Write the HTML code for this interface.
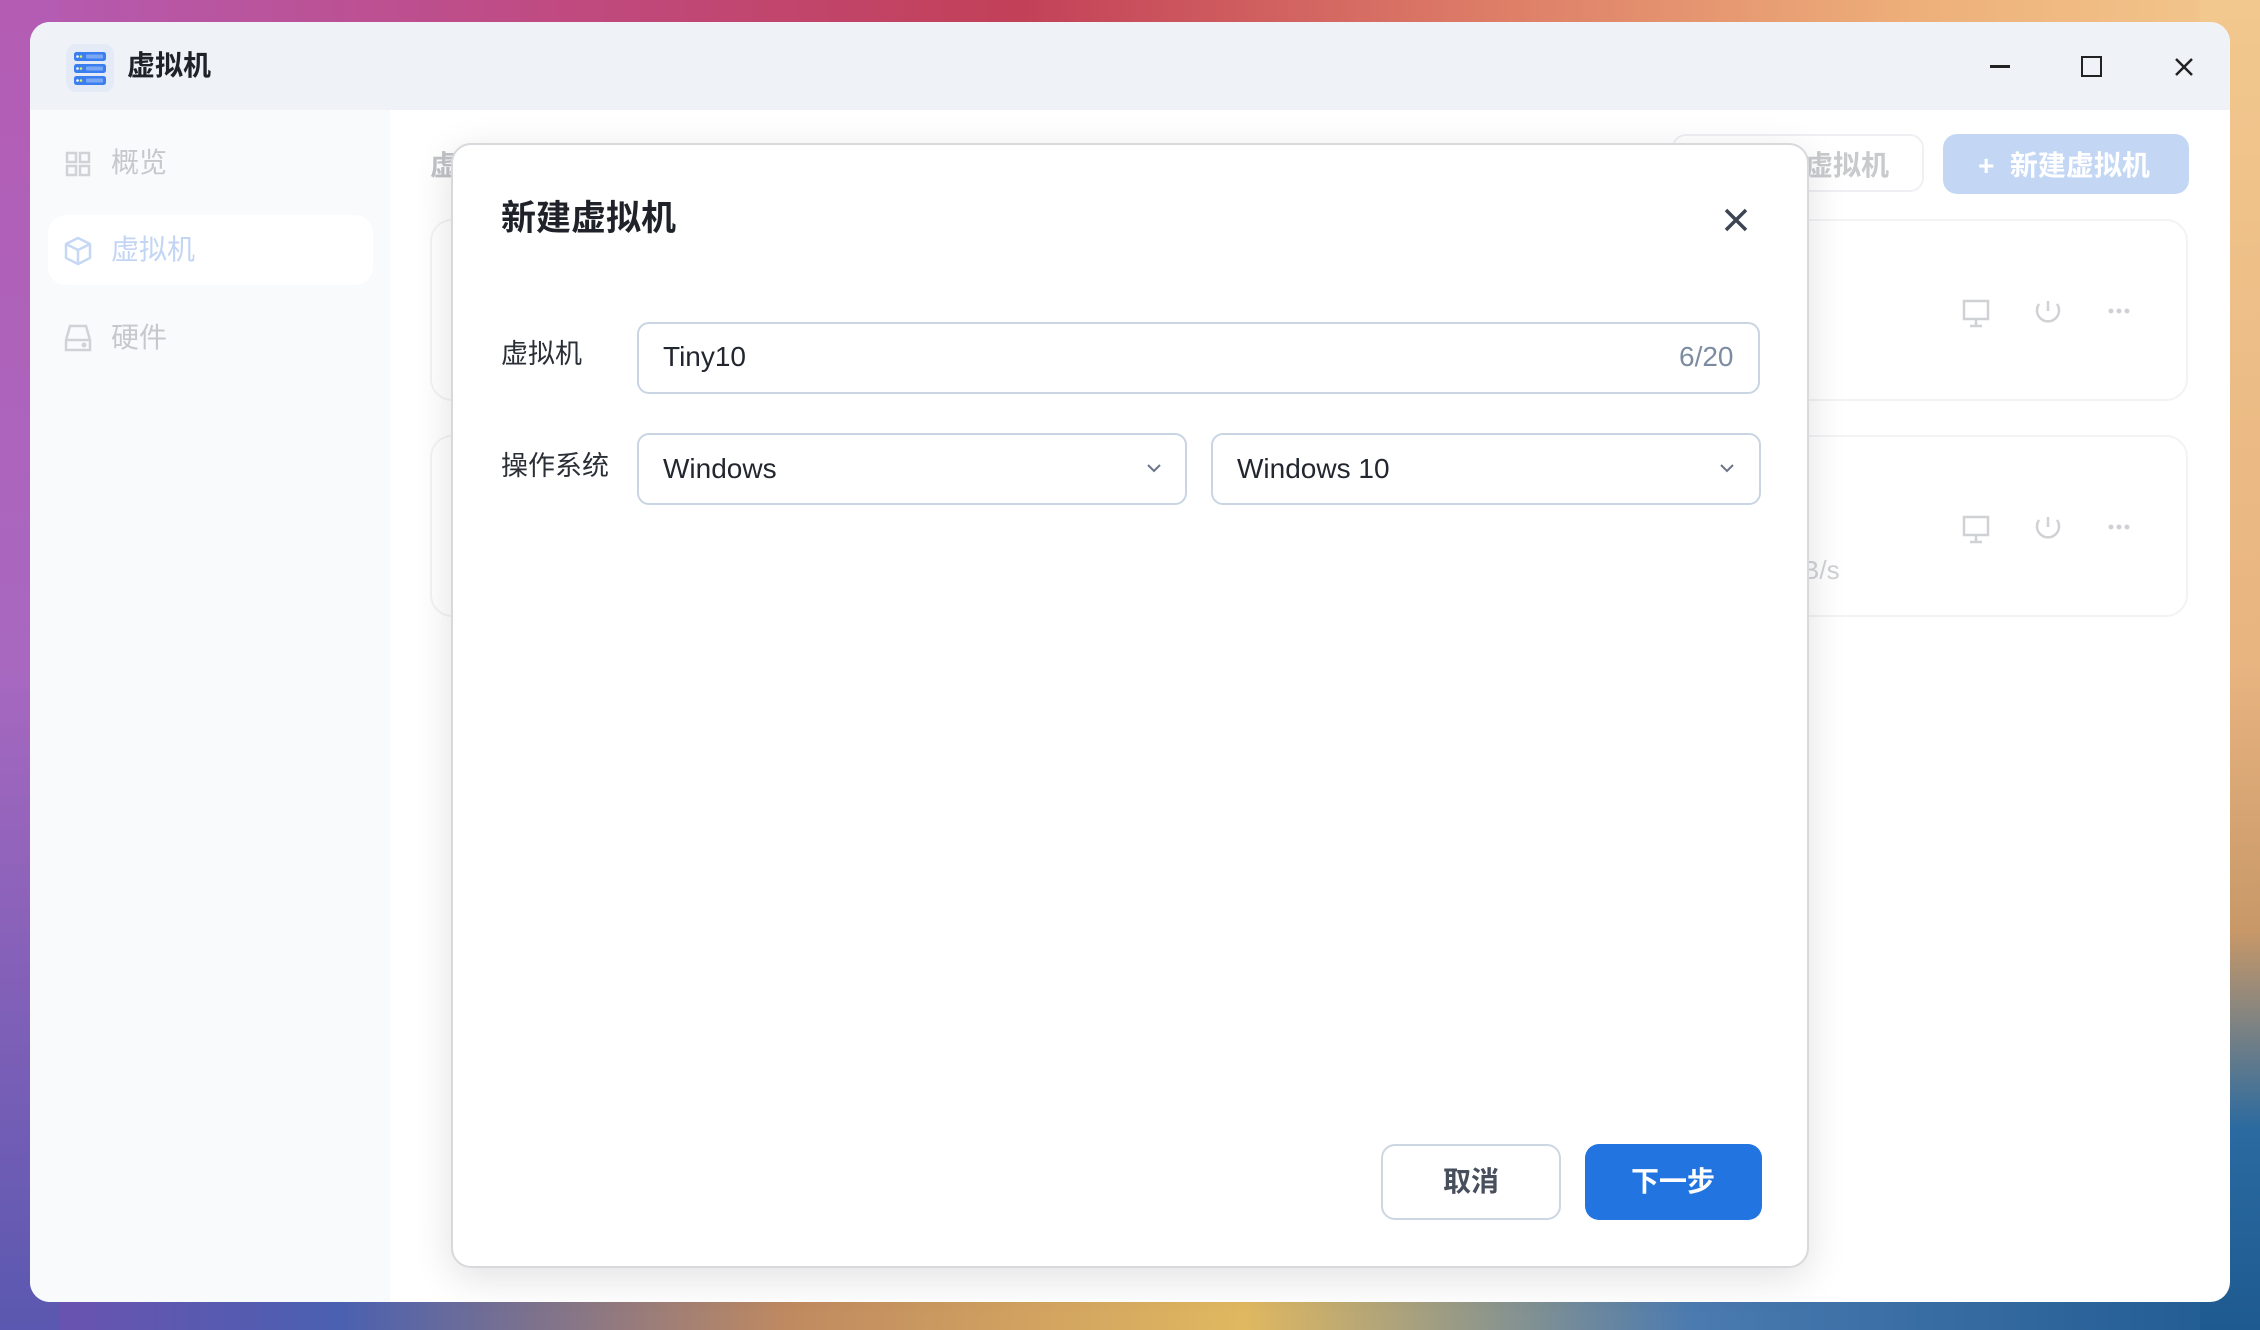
<!DOCTYPE html>
<html><head><meta charset="utf-8"><style>
*{box-sizing:border-box;margin:0;padding:0}
body{width:2260px;height:1330px;overflow:hidden;position:relative;font-family:"Liberation Sans","Noto Sans CJK SC",sans-serif;
background:linear-gradient(90deg,#b45cb4 0%,#c04a80 25%,#c24058 45%,#dc7a66 65%,#eeb07a 85%,#f2c88e 100%);}
.bot{position:absolute;left:0;right:0;bottom:0;height:330px;background:linear-gradient(90deg,#7050b0 0%,#4a60b0 15%,#c08a60 35%,#e0b860 55%,#4a7ab0 75%,#1e5a90 100%);}
.leftfade{position:absolute;left:0;top:0;width:60px;height:1330px;background:linear-gradient(180deg,#b45cb4,#a868c0 50%,#5a58b0);}
.rightfade{position:absolute;right:0;top:0;width:60px;height:1330px;background:linear-gradient(180deg,#f2c88e,#e8b480 50%,#c89868 70%,#2a6aa0 85%,#1e5a90);}
.win{position:absolute;left:30px;top:22px;width:2200px;height:1280px;border-radius:20px;background:#fff;overflow:hidden;}
.tb{position:absolute;left:0;top:0;width:2200px;height:88px;background:#eff3f8;}
.side{position:absolute;left:0;top:88px;width:360px;height:1192px;background:#f9fafc;}
.t{position:absolute;white-space:nowrap;line-height:1}
.card{position:absolute;left:400px;width:1758px;border:2px solid #f2f3f5;border-radius:22px;background:#fff}
.modal{position:absolute;left:451px;top:143px;width:1358px;height:1125px;background:#fff;border:2px solid #d8d9dc;border-radius:20px;box-shadow:0 10px 40px rgba(0,0,0,.12)}
.inp{position:absolute;border:2px solid #c9d5e3;border-radius:12px;background:#fff}
</style></head><body>
<div class="bot"></div><div class="leftfade"></div><div class="rightfade"></div>
<div class="win">
 <div class="tb"></div>
 <svg style="position:absolute;left:36px;top:22px" width="48" height="48" viewBox="0 0 48 48">
  <rect x="0" y="0" width="48" height="48" rx="10" fill="#e4ebf6"/>
  <rect x="8" y="8" width="32" height="9" rx="2.5" fill="#3b7ef0"/><rect x="8" y="20" width="32" height="9" rx="2.5" fill="#3b7ef0"/><rect x="8" y="32" width="32" height="9" rx="2.5" fill="#3b7ef0"/>
  <rect x="20" y="10.5" width="17" height="4" rx="1" fill="#7aa8f5"/><rect x="20" y="22.5" width="17" height="4" rx="1" fill="#7aa8f5"/><rect x="20" y="34.5" width="17" height="4" rx="1" fill="#7aa8f5"/>
  <circle cx="11.5" cy="12.5" r="1.3" fill="#fff"/><circle cx="15" cy="12.5" r="1.3" fill="#d8f060"/><circle cx="11.5" cy="24.5" r="1.3" fill="#fff"/><circle cx="15" cy="24.5" r="1.3" fill="#d8f060"/><circle cx="11.5" cy="36.5" r="1.3" fill="#fff"/><circle cx="15" cy="36.5" r="1.3" fill="#d8f060"/>
 </svg>
 <div class="t" style="left:97px;top:30px;font-size:28px;font-weight:bold;color:#1f2329">虚拟机</div>
 <div style="position:absolute;left:1960px;top:43px;width:20px;height:3px;background:#222"></div>
 <div style="position:absolute;left:2051px;top:34px;width:21px;height:21px;border:2.5px solid #222"></div>
 <svg style="position:absolute;left:2143px;top:34px" width="22" height="22" viewBox="0 0 22 22"><path d="M3 3L19 19M19 3L3 19" stroke="#222" stroke-width="2.5"/></svg>
 <div class="side">
  <svg style="position:absolute;left:35px;top:41px" width="26" height="26" viewBox="0 0 26 26" fill="none" stroke="#cfd2d6" stroke-width="2.5"><rect x="2" y="2" width="9" height="9"/><rect x="15" y="2" width="9" height="9"/><rect x="2" y="15" width="9" height="9"/><rect x="15" y="15" width="9" height="9"/></svg>
  <div class="t" style="left:81px;top:39px;font-size:28px;color:#c6c8cc">概览</div>
  <div style="position:absolute;left:18px;top:105px;width:325px;height:70px;background:#fff;border-radius:18px"></div>
  <svg style="position:absolute;left:34px;top:126px" width="28" height="30" viewBox="0 0 28 30" fill="none" stroke="#c6d8f4" stroke-width="2.5" stroke-linejoin="round"><path d="M14 2L26 8V22L14 28L2 22V8Z M2 8L14 14L26 8 M14 14V28"/></svg>
  <div class="t" style="left:81px;top:126px;font-size:28px;color:#c2d5f4">虚拟机</div>
  <svg style="position:absolute;left:34px;top:214px" width="28" height="28" viewBox="0 0 28 28" fill="none" stroke="#cfd2d6" stroke-width="2.5"><path d="M6 2H22L26 16V26H2V16Z M2 16H26"/><circle cx="20" cy="21" r="1.2" fill="#cfd2d6"/></svg>
  <div class="t" style="left:81px;top:214px;font-size:28px;color:#c6c8cc">硬件</div>
 </div>
 <div class="t" style="left:400px;top:130px;font-size:28px;font-weight:bold;color:#c0c2c6">虚拟机</div>
 <div style="position:absolute;left:1642px;top:112px;width:252px;height:58px;border:2px solid #eef0f3;border-radius:14px"></div>
 <div class="t" style="left:1775px;top:130px;font-size:28px;font-weight:bold;color:#c8cacd">虚拟机</div>
 <div style="position:absolute;left:1913px;top:112px;width:246px;height:60px;background:#c3d7f5;border-radius:14px"></div>
 <div class="t" style="left:1948px;top:130px;font-size:28px;font-weight:bold;color:#fff">+&nbsp;&nbsp;新建虚拟机</div>
 <div class="card" style="top:197px;height:182px"></div>
 <div class="card" style="top:413px;height:182px"></div>
 <svg style="position:absolute;left:1931px;top:276px" width="200" height="300" viewBox="0 0 200 300" fill="none" stroke="#cfd1d5" stroke-width="2.5">
  <g><rect x="3" y="3" width="24" height="18"/><path d="M15 21V27M9 28H21"/><path d="M87 3V13M78 6A11 11 0 1 0 96 6"/></g>
  <g fill="#cfd1d5" stroke="none"><circle cx="150" cy="13" r="2.5"/><circle cx="158" cy="13" r="2.5"/><circle cx="166" cy="13" r="2.5"/></g>
  <g transform="translate(0,216)"><rect x="3" y="3" width="24" height="18"/><path d="M15 21V27M9 28H21"/><path d="M87 3V13M78 6A11 11 0 1 0 96 6"/><g fill="#cfd1d5" stroke="none"><circle cx="150" cy="13" r="2.5"/><circle cx="158" cy="13" r="2.5"/><circle cx="166" cy="13" r="2.5"/></g></g>
 </svg>
 <div class="t" style="left:1772px;top:535px;font-size:26px;color:#cfd1d5">B/s</div>
</div>
<div class="modal">
 <div class="t" style="left:48px;top:56px;font-size:35px;font-weight:bold;color:#1f2329">新建虚拟机</div>
 <svg style="position:absolute;left:1270px;top:62px" width="26" height="26" viewBox="0 0 26 26"><path d="M3 3L23 23M23 3L3 23" stroke="#3d4452" stroke-width="3.5"/></svg>
 <div class="t" style="left:48px;top:196px;font-size:27px;color:#2a2e36">虚拟机</div>
 <div class="inp" style="left:184px;top:177px;width:1123px;height:72px"></div>
 <div class="t" style="left:210px;top:198px;font-size:28px;color:#22262e">Tiny10</div>
 <div class="t" style="left:1226px;top:198px;font-size:28px;color:#7d8ca2">6/20</div>
 <div class="t" style="left:48px;top:308px;font-size:27px;color:#2a2e36">操作系统</div>
 <div class="inp" style="left:184px;top:288px;width:550px;height:72px"></div>
 <div class="t" style="left:210px;top:310px;font-size:28px;color:#22262e">Windows</div>
 <svg style="position:absolute;left:693px;top:318px" width="16" height="10" viewBox="0 0 16 10"><path d="M2 2L8 8L14 2" fill="none" stroke="#6b7588" stroke-width="2"/></svg>
 <div class="inp" style="left:758px;top:288px;width:550px;height:72px"></div>
 <div class="t" style="left:784px;top:310px;font-size:28px;color:#22262e">Windows 10</div>
 <svg style="position:absolute;left:1266px;top:318px" width="16" height="10" viewBox="0 0 16 10"><path d="M2 2L8 8L14 2" fill="none" stroke="#6b7588" stroke-width="2"/></svg>
 <div style="position:absolute;left:928px;top:999px;width:180px;height:76px;border:2px solid #cdd7e3;border-radius:14px;background:#fff"></div>
 <div class="t" style="left:990px;top:1023px;font-size:28px;font-weight:bold;color:#474e5c">取消</div>
 <div style="position:absolute;left:1132px;top:999px;width:177px;height:76px;background:#2275e0;border-radius:14px"></div>
 <div class="t" style="left:1178px;top:1023px;font-size:28px;font-weight:bold;color:#fff">下一步</div>
</div>
</body></html>
